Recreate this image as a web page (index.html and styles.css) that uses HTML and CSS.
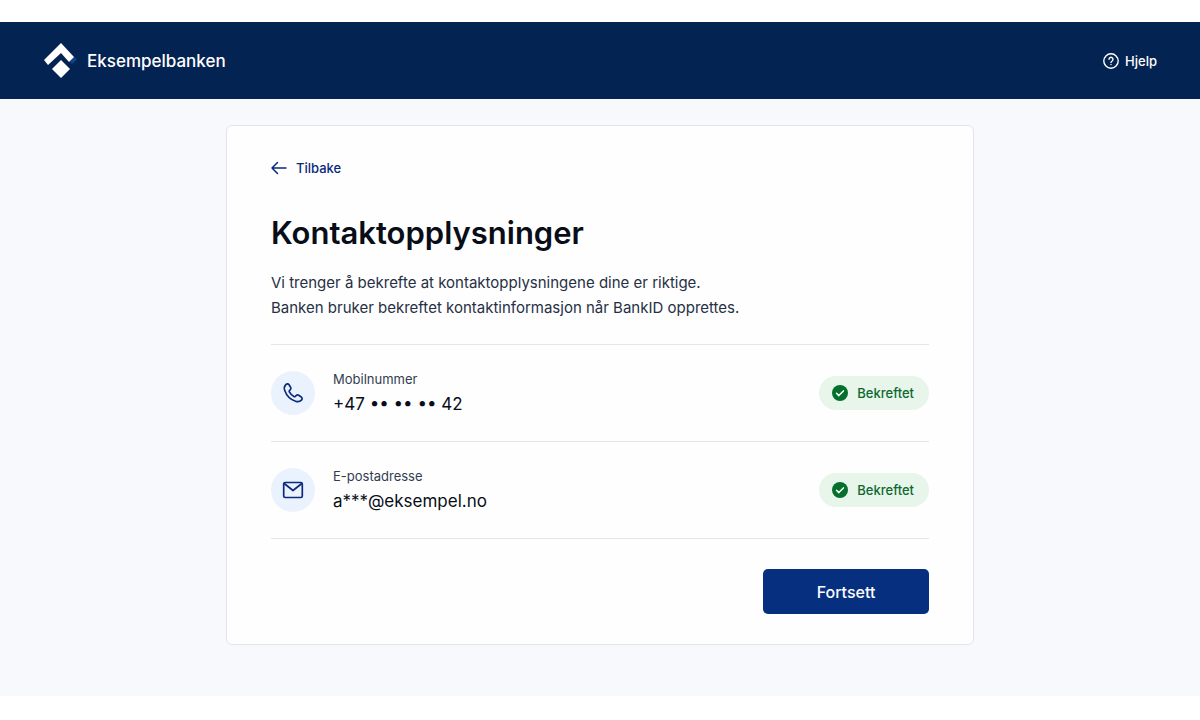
FILE: index.html
```html
<!DOCTYPE html>
<html lang="no">
<head>
    <meta charset="UTF-8">
    <meta name="viewport" content="width=device-width, initial-scale=1.0">
    <title>Kontaktopplysninger</title>
    <link rel="stylesheet" href="styles.css">
</head>
<body>
    <header class="topbar">
        <a href="/" class="brand">
            <svg class="logo" viewBox="0 0 34 36" width="34" height="36">
                <path d="M26 19l4-5 3 2-5 5z" fill="#0d458f"/>
                <path d="M17 0L0 17l4 5 13-12 8 9 5-5z" fill="#fff"/>
                <path d="M17 17l9 9-9 9-9-9z" fill="#fff"/>
            </svg>
            Eksempelbanken
        </a>
        <a href="/hjelp" class="help">
            <svg viewBox="0 0 16 16" width="16" height="16" fill="none" stroke="#fff" stroke-width="1.4" stroke-linecap="round">
                <circle cx="8" cy="8" r="7.2"/>
                <path d="M6 6.300a2 2 0 1 1 3.100 1.700C8.300 8.500 8 8.800 8 9.400"/>
                <path d="M8 11.500v.1"/>
            </svg>
            Hjelp
        </a>
    </header>

    <main>
        <div class="card">
            <a href="/" class="back">
                <svg viewBox="0 0 16 14" width="16" height="14" fill="none" stroke="currentColor" stroke-width="1.5" stroke-linecap="round" stroke-linejoin="round">
                    <path d="M15 7H1M6.500 1.500L1 7l5.500 5.500"/>
                </svg>
                Tilbake
            </a>
            <h1>Kontaktopplysninger</h1>
            <p class="intro">Vi trenger å bekrefte at kontaktopplysningene dine er riktige.<br>Banken bruker bekreftet kontaktinformasjon når BankID opprettes.</p>

            <ul class="contacts">
                <li>
                    <span class="icon">
                        <svg viewBox="0 0 24 24" width="22" height="22" fill="none" stroke="currentColor" stroke-width="1.8" stroke-linejoin="round">
                            <path d="M4.200 2.800C5.300 1.700 6.900 1.800 7.700 3l1.700 2.700c.6 1 .4 2-.4 2.800l-.9.9c-.4.4-.4.900-.1 1.500 1.100 2.100 2.900 3.900 5 5 .6.3 1.100.3 1.500-.1l.9-.9c.8-.8 1.800-1 2.800-.4L21 16.300c1.200.8 1.300 2.400.2 3.500-1.700 1.700-4 2.100-6.400 1.200C9.300 19.100 4.900 14.700 3 9.200c-.9-2.400-.5-4.700 1.200-6.400z"/>
                        </svg>
                    </span>
                    <div class="details">
                        <span class="label">Mobilnummer</span>
                        <span class="value">+47 •• •• •• 42</span>
                    </div>
                    <span class="status">
                        <svg viewBox="0 0 16 16" width="16" height="16" fill="none">
                            <circle cx="8" cy="8" r="8" fill="#04702b"/>
                            <path d="M4.500 8.300l2.300 2.300 4.600-4.700" stroke="#fff" stroke-width="1.500" stroke-linecap="round" stroke-linejoin="round"/>
                        </svg>
                        Bekreftet
                    </span>
                </li>
                <li>
                    <span class="icon">
                        <svg viewBox="0 0 22 18" width="22" height="18" fill="none" stroke="currentColor" stroke-width="1.700" stroke-linejoin="round">
                            <rect x="1.700" y="1.500" width="18.600" height="15" rx="1.500"/>
                            <path d="M2.200 2.500l8.800 7 8.800-7"/>
                        </svg>
                    </span>
                    <div class="details">
                        <span class="label">E-postadresse</span>
                        <span class="value">a***@eksempel.no</span>
                    </div>
                    <span class="status">
                        <svg viewBox="0 0 16 16" width="16" height="16" fill="none">
                            <circle cx="8" cy="8" r="8" fill="#04702b"/>
                            <path d="M4.500 8.300l2.300 2.300 4.600-4.700" stroke="#fff" stroke-width="1.500" stroke-linecap="round" stroke-linejoin="round"/>
                        </svg>
                        Bekreftet
                    </span>
                </li>
            </ul>

            <div class="actions">
                <button type="button">Fortsett</button>
            </div>
        </div>
    </main>
</body>
</html>
```
FILE: styles.css
```css
* {
    box-sizing: border-box;
}
body {
    margin: 0;
    padding: 22px 0 24px;
    font-family: Inter, "Liberation Sans", sans-serif;
    background-color: #fff;
    color: #080d18;
}
a {
    text-decoration: none;
}
svg {
    flex-shrink: 0;
}

/* top bar */
.topbar {
    display: flex;
    justify-content: space-between;
    align-items: center;
    padding: 21px 43px 20px 44px;
    background-color: #032352;
}
.brand, .help {
    display: flex;
    align-items: center;
    color: #fff;
    font-weight: 500;
}
.brand {
    gap: 9px;
    font-size: 17px;
}
.help {
    gap: 6px;
    font-size: 13px;
}

main {
    padding: 26px 20px 51px;
    background-color: #f7f9fd;
}
.card {
    max-width: 748px;
    margin: 0 auto;
    padding: 32px 44px 30px;
    background-color: #fefefe;
    border: 1px solid #e1e5eb;
    border-radius: 6px;
}
.back {
    display: inline-flex;
    align-items: center;
    gap: 9px;
    color: #0a2a7c;
    font-size: 13px;
    font-weight: 500;
    line-height: 20px;
}
h1 {
    margin: 34px 0 17px;
    font-size: 31px;
    font-weight: 600;
    line-height: 40px;
}
.intro {
    margin: 0 0 24px;
    color: #263044;
    font-size: 15px;
    line-height: 25px;
}

/* contact rows */
.contacts {
    list-style: none;
    margin: 0;
    padding: 0;
    border-top: 1px solid #e4e6ea;
}
.contacts li {
    display: flex;
    align-items: center;
    gap: 18px;
    padding: 23px 0;
    border-bottom: 1px solid #e4e6ea;
}
.icon {
    display: flex;
    align-items: center;
    justify-content: center;
    width: 44px;
    height: 44px;
    border-radius: 50%;
    background-color: #eaf2fe;
    color: #0a2a7c;
}
.details {
    flex: 1;
}
.label, .value {
    display: block;
}
.label {
    color: #323d50;
    font-size: 13px;
    line-height: 22px;
}
.value {
    font-size: 17px;
    line-height: 28px;
}
.status {
    display: flex;
    align-items: center;
    gap: 9px;
    padding: 8px 15px 8px 13px;
    border-radius: 17px;
    background-color: #e7f5ea;
    color: #0d692f;
    font-size: 13px;
    font-weight: 500;
    line-height: 18px;
}

.actions {
    display: flex;
    justify-content: flex-end;
    padding-top: 30px;
}
button {
    width: 166px;
    height: 45px;
    border: none;
    border-radius: 5px;
    background-color: #062f7f;
    color: #fff;
    font-family: inherit;
    font-size: 16px;
    font-weight: 500;
    cursor: pointer;
}
```
